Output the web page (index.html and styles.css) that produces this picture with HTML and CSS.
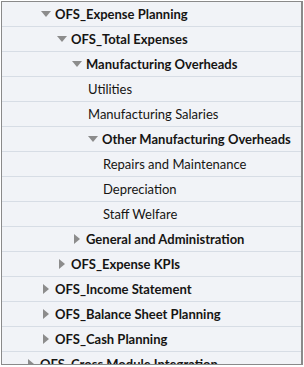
FILE: index.html
```html
<!DOCTYPE html>
<html lang="en">
<head>
    <meta charset="UTF-8">
    <meta name="viewport" content="width=device-width, initial-scale=1.0">
    <title>Hierarchy</title>
    <link rel="stylesheet" href="styles.css">
</head>
<body>
    <div class="tree">
        <div class="row lvl-0 parent"><span class="toggle open"></span><span class="label">OFS_Expense Planning</span></div>
        <div class="row lvl-1 parent"><span class="toggle open"></span><span class="label">OFS_Total Expenses</span></div>
        <div class="row lvl-2 parent"><span class="toggle open"></span><span class="label">Manufacturing Overheads</span></div>
        <div class="row lvl-3 leaf"><span class="label">Utilities</span></div>
        <div class="row lvl-3 leaf"><span class="label">Manufacturing Salaries</span></div>
        <div class="row lvl-3 parent"><span class="toggle open"></span><span class="label">Other Manufacturing Overheads</span></div>
        <div class="row lvl-4 leaf"><span class="label">Repairs and Maintenance</span></div>
        <div class="row lvl-4 leaf"><span class="label">Depreciation</span></div>
        <div class="row lvl-4 leaf"><span class="label">Staff Welfare</span></div>
        <div class="row lvl-2 parent"><span class="toggle"></span><span class="label">General and Administration</span></div>
        <div class="row lvl-1 parent"><span class="toggle"></span><span class="label">OFS_Expense KPIs</span></div>
        <div class="row lvl-0 parent"><span class="toggle"></span><span class="label">OFS_Income Statement</span></div>
        <div class="row lvl-0 parent"><span class="toggle"></span><span class="label">OFS_Balance Sheet Planning</span></div>
        <div class="row lvl-0 parent"><span class="toggle"></span><span class="label">OFS_Cash Planning</span></div>
        <div class="row lvl-top parent"><span class="toggle"></span><span class="label">OFS_Cross Module Integration</span></div>
    </div>
</body>
</html>
```

FILE: styles.css
```css
body {
    margin: 0;
    background-color: #ffffff;
    font-family: Lato, "Open Sans", sans-serif;
}

.tree {
    margin: 1px 1px 0 1px;
    height: 362px;
    border: 1px solid #8a8a8a;
    border-right-width: 2px;
    background-color: #f1f3f7;
    overflow: hidden;
}

.row {
    display: flex;
    align-items: center;
    height: 24px;
    border-bottom: 1px solid #d7dde5;
    font-size: 13px;
    color: #161513;
    white-space: nowrap;
}

.parent .label {
    font-weight: bold;
}

.toggle {
    display: flex;
    align-items: center;
    justify-content: center;
    width: 14px;
    height: 14px;
    margin-right: 2px;
    flex-shrink: 0;
}

.toggle::before {
    content: "";
    border-style: solid;
    border-color: transparent transparent transparent #8c8c8c;
    border-width: 5px 0 5px 6px;
}

.toggle.open::before {
    border-color: #8c8c8c transparent transparent transparent;
    border-width: 6px 5px 0 5px;
}

.lvl-top { padding-left: 22px; }
.lvl-0 { padding-left: 37px; }
.lvl-1 { padding-left: 53px; }
.lvl-2 { padding-left: 68px; }
.lvl-3 { padding-left: 84px; }
.lvl-4 { padding-left: 99px; }

.leaf.lvl-3 { padding-left: 86px; }
.leaf.lvl-4 { padding-left: 101px; }
```
